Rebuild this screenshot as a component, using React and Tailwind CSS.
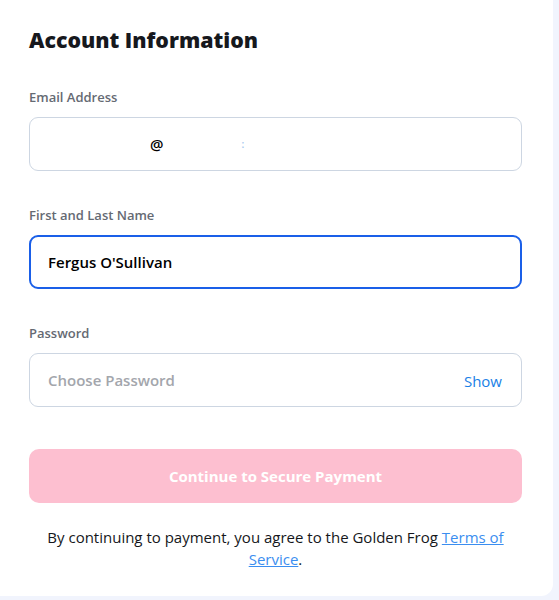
import React, { useState } from "react"

const Field = ({ label, children }) => (
    <div className="mb-[35px]">
        <label className="block text-[13px] leading-[18px] font-semibold text-[#656a73] mb-[11px]">{label}</label>
        {children}
    </div>
)

const App = () => {
    const [name, setName] = useState("Fergus O'Sullivan")
    const [password, setPassword] = useState("")
    const [show, setShow] = useState(false)

    return (
        <div className="min-h-screen bg-[#f1f4fd] pb-1" style={{ fontFamily: '"Open Sans", "Noto Sans", sans-serif' }}>
            <div className="w-[553px] bg-white rounded-br-[12px] pl-[29px] pr-[31px] pt-6 pb-[26px]">
                <h2 className="text-[21.3px] leading-8 font-extrabold text-[#16181d] mb-8">Account Information</h2>

                <Field label="Email Address">
                    <div className="h-[54px] w-full border border-[#cdd6e2] rounded-[9px] flex items-center pl-[18px] text-[15px] font-semibold text-black">
                        <span className="w-[102px]" />
                        <span>@</span>
                        <span className="w-[78px]" />
                        <span className="text-[10px] text-[#9ec3ee]">:</span>
                    </div>
                </Field>

                <Field label="First and Last Name">
                    <input
                        value={name}
                        onChange={(e) => setName(e.target.value)}
                        className="h-[54px] w-full border-2 border-[#1a5fe8] rounded-[9px] px-[17px] text-[15px] font-semibold text-black outline-none"
                    />
                </Field>

                <Field label="Password">
                    <div className="h-[54px] w-full border border-[#cdd6e2] rounded-[9px] flex items-center pl-[18px] pr-[19px]">
                        <input
                            type={show ? "text" : "password"}
                            value={password}
                            placeholder="Choose Password"
                            onChange={(e) => setPassword(e.target.value)}
                            className="flex-1 text-[15px] font-semibold text-black placeholder:text-[#a3a6ac] outline-none"
                        />
                        <button type="button" onClick={() => setShow(!show)} className="text-[15px] text-[#1a7fe6] mt-[3px]">
                            {show ? "Hide" : "Show"}
                        </button>
                    </div>
                </Field>

                <button
                    disabled
                    className="mt-[7px] h-[54px] w-full rounded-[10px] bg-[#fdbfd0] text-white text-[15px] font-bold"
                >
                    Continue to Secure Payment
                </button>

                <p className="mt-[23px] px-1 text-center text-[15px] leading-[22px] text-[#15171b]">
                    By continuing to payment, you agree to the Golden Frog{" "}
                    <a href="#" className="text-[#3b8ef0] underline">Terms of Service</a>.
                </p>
            </div>
        </div>
    )
}

export default App
